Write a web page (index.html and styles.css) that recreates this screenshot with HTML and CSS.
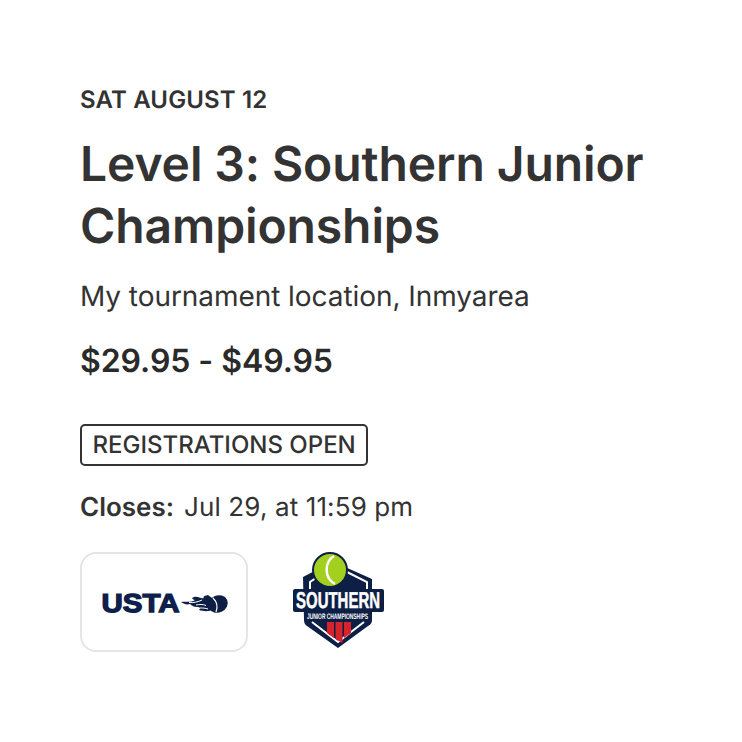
FILE: index.html
```html
<!DOCTYPE html>
<html lang="en">
<head>
<meta charset="utf-8">
<title>Level 3: Southern Junior Championships</title>
<link rel="stylesheet" href="styles.css">
</head>
<body>
<main class="event">
  <div class="date">SAT AUGUST 12</div>
  <h1 class="title">Level 3: Southern Junior Championships</h1>
  <div class="location">My tournament location, Inmyarea</div>
  <div class="price">$29.95 - $49.95</div>
  <div class="badge">REGISTRATIONS OPEN</div>
  <div class="closes"><strong class="closes-label">Closes:</strong><span class="closes-value">Jul 29, at 11:59 pm</span></div>
  <div class="logos">
    <div class="logo-card">
      <svg class="usta" width="130" height="24" viewBox="0 0 130 24">
        <text class="usta-text" x="2.5" y="22" textLength="78" lengthAdjust="spacingAndGlyphs">USTA</text>
        <path class="navy" d="M82 12C87 11 91 13 96 10C93 9 92 8 95 7C99 6 102 9 105 8C104 7 104 6 109 5L113 8V20C108 22 104 21 100 20C102 18 101 17 98 17C95 17 93 16 91 14C88 15 85 14 82 12Z"/>
        <path class="flame-gap" d="M90 12.500C94 13 99 12 103 10M97 15C100 14.500 104 14 107 15.500M101 18C104 18 106 18 109 19"/>
        <ellipse class="navy" cx="119" cy="14" rx="10" ry="8.500" transform="rotate(-25 119 14)"/>
        <path class="ball-seam" d="M114 8C118 12 119 17 117 22"/>
      </svg>
    </div>
    <svg class="southern" width="92" height="96" viewBox="0 0 92 96">
      <path class="navy" d="M10 23 35 10 52 13 79 25V66Q79 70 75 72L45 94 14 72Q11 70 11 66z"/>
      <path class="shield-line" d="M54 18 74 28V35M17 35V28L23 24M19 68 45 88 71 68"/>
      <circle class="ball" cx="37" cy="16" r="17"/>
      <path class="ball-line" d="M41 2C31 8 31 24 42 30"/>
      <rect class="navy" x="0" y="35" width="91" height="23" rx="2"/>
      <text class="southern-text" x="3" y="54" textLength="84" lengthAdjust="spacingAndGlyphs">SOUTHERN</text>
      <text class="junior-text" x="14" y="65" textLength="61" lengthAdjust="spacingAndGlyphs">JUNIOR CHAMPIONSHIPS</text>
      <path class="red" d="M34 68h7v16l-7-5zM42.500 68h7v21l-7-4zM51 68h7v11l-7 5z"/>
    </svg>
  </div>
</main>
</body>
</html>
```
FILE: styles.css
```css
* { box-sizing: border-box; }
html, body { margin: 0; padding: 0; background: #fff; }
body { font-family: Inter, "Liberation Sans", sans-serif; color: #333; text-rendering: geometricPrecision; }
.event { padding: 84px 80px 0; display: flex; flex-direction: column; align-items: flex-start; }
.date { font-size: 24px; font-weight: 600; line-height: 32px; letter-spacing: 0.15px; }
.title { margin: 17px 0 0; font-size: 48px; font-weight: 600; line-height: 62.4px; letter-spacing: -0.1px; }
.location { margin-top: 19px; font-size: 28px; line-height: 38px; letter-spacing: -0.06px; }
.price { margin-top: 26px; font-size: 32px; font-weight: 600; line-height: 40px; letter-spacing: -0.07px; color: #2a2a2a; }
.badge { margin-top: 43px; height: 42px; padding: 0 10.5px; border: 2px solid #333; border-radius: 5px; font-size: 24px; font-weight: 500; line-height: 38px; }
.closes { margin-top: 24px; display: flex; gap: 10px; font-size: 26px; line-height: 36px; }
.closes-label { font-weight: 600; }
.closes-value { letter-spacing: 0.12px; }
.logos { margin-top: 26px; display: flex; align-items: center; gap: 45px; }
.logo-card { width: 168px; height: 100px; border: 2px solid #e5e5e5; border-radius: 16px; display: flex; align-items: center; justify-content: center; }
.usta, .southern { overflow: visible; }
.usta-text { font-family: "Liberation Sans", sans-serif; font-weight: 700; font-size: 26px; fill: #0f1f4b; stroke: #0f1f4b; stroke-width: 1.3px; }
.navy { fill: #0d1f45; }
.flame-gap { fill: none; stroke: #fff; stroke-width: 1; }
.ball-seam { fill: none; stroke: #fff; stroke-width: 1.2; }
.shield-line { fill: none; stroke: #fff; stroke-width: 2; }
.ball { fill: #a3cf1f; stroke: #0d1f45; stroke-width: 2; }
.ball-line { fill: none; stroke: #fff; stroke-width: 2.5; }
.southern-text { font-family: "Liberation Sans", sans-serif; font-weight: 700; font-size: 23px; fill: #fff; stroke: #fff; stroke-width: 0.5px; }
.junior-text { font-family: "Liberation Sans", sans-serif; font-weight: 700; font-size: 8px; fill: #fff; }
.red { fill: #d8232a; }
```
